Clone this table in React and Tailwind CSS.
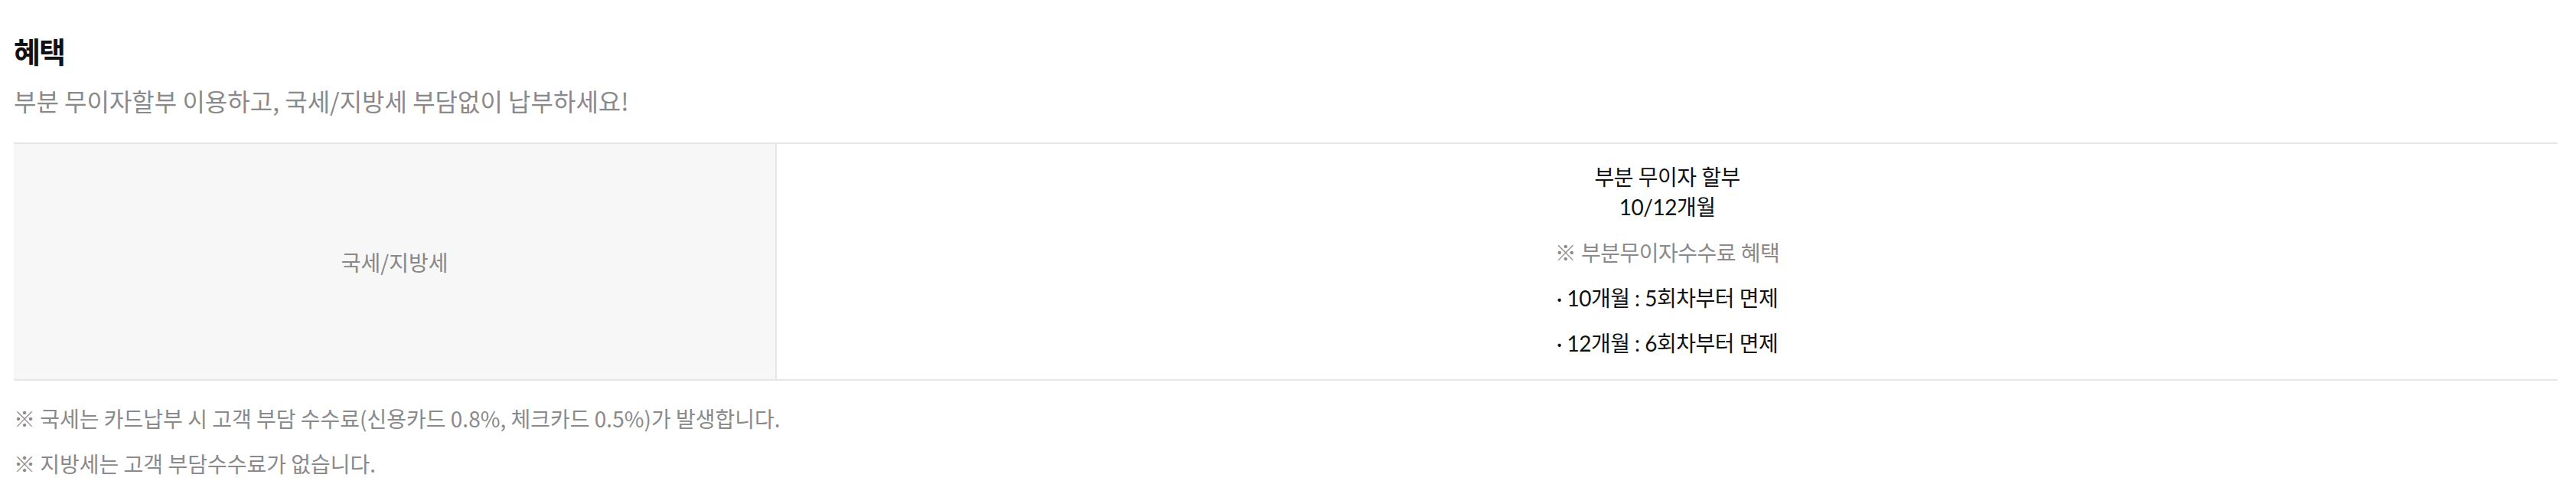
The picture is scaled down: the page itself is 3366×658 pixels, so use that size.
export default function App() {
  const cell = "font-['Lato','Noto_Sans_CJK_KR',sans-serif]";
  const kr = "font-['Noto_Sans_CJK_KR','Noto_Sans',sans-serif]";
  return (
    <div className={`w-full h-[658px] bg-white pl-[18px] pr-[24px] pt-[44px] ${kr}`}>
      <h2 className="text-[38px] leading-[44px] font-bold text-[#111] tracking-[-2px]">혜택</h2>
      <p className="mt-[23px] text-[32px] leading-[40px] text-[#8a8a8a]">
        부분 무이자할부 이용하고, 국세/지방세 부담없이 납부하세요!
      </p>
      <div className="mt-[35px] grid grid-cols-[30%_70%] border-y-2 border-[#e6e6e6]">
        <div className="bg-[#f7f7f7] border-r-2 border-[#e6e6e6] flex items-center justify-center">
          <span className="text-[28px] leading-[40px] text-[#888]">국세/지방세</span>
        </div>
        <div className={`flex flex-col items-center pt-[24px] pb-[27px] text-center ${cell}`}>
          <div className="text-[28px] leading-[39px] text-[#111] tracking-[-0.5px]">
            <p>부분 무이자 할부</p>
            <p>10/12개월</p>
          </div>
          <p className="mt-[20px] text-[28px] leading-[40px] text-[#8a8a8a] tracking-[-0.5px]">※ 부분무이자수수료 혜택</p>
          <p className="mt-[19px] text-[28px] leading-[40px] text-[#111] tracking-[-0.5px]">· 10개월 : 5회차부터 면제</p>
          <p className="mt-[19px] text-[28px] leading-[40px] text-[#111] tracking-[-0.5px]">· 12개월 : 6회차부터 면제</p>
        </div>
      </div>
      <div className="mt-[29px] flex flex-col gap-[19px] text-[28px] leading-[40px] text-[#8a8a8a]">
        <p>※ 국세는 카드납부 시 고객 부담 수수료(신용카드 0.8%, 체크카드 0.5%)가 발생합니다.</p>
        <p>※ 지방세는 고객 부담수수료가 없습니다.</p>
      </div>
    </div>
  );
}
